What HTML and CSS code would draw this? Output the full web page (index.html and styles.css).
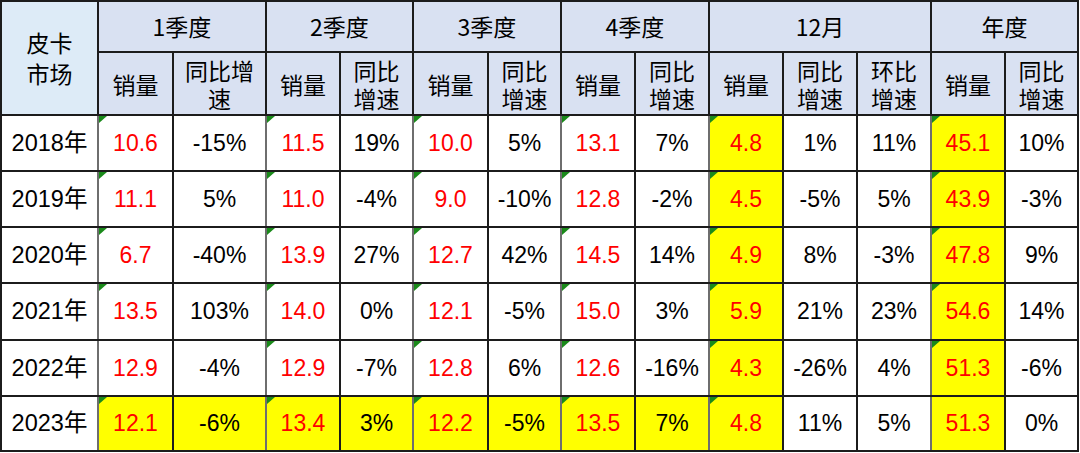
FILE: index.html
```html
<!DOCTYPE html>
<html lang="zh-CN">
<head>
<meta charset="utf-8">
<title>皮卡市场</title>
<link rel="stylesheet" href="styles.css">
</head>
<body>
<div class="sheet">
  <div class="c hd corner"><span>皮卡</span><span>市场</span></div>
  <div class="c hd q1">1季度</div>
  <div class="c hd q2">2季度</div>
  <div class="c hd q2">3季度</div>
  <div class="c hd q2">4季度</div>
  <div class="c hd q3">12月</div>
  <div class="c hd q2">年度</div>

  <div class="c hd sub">销量</div><div class="c hd sub">同比增速</div>
  <div class="c hd sub">销量</div><div class="c hd sub">同比增速</div>
  <div class="c hd sub">销量</div><div class="c hd sub">同比增速</div>
  <div class="c hd sub">销量</div><div class="c hd sub">同比增速</div>
  <div class="c hd sub">销量</div><div class="c hd sub">同比增速</div><div class="c hd sub">环比增速</div>
  <div class="c hd sub">销量</div><div class="c hd sub">同比增速</div>

  <div class="c yr">2018年</div>
  <div class="c v t">10.6</div><div class="c">-15%</div>
  <div class="c v t">11.5</div><div class="c">19%</div>
  <div class="c v t">10.0</div><div class="c">5%</div>
  <div class="c v t">13.1</div><div class="c">7%</div>
  <div class="c v t y">4.8</div><div class="c">1%</div><div class="c">11%</div>
  <div class="c v t y">45.1</div><div class="c">10%</div>

  <div class="c yr">2019年</div>
  <div class="c v t">11.1</div><div class="c">5%</div>
  <div class="c v t">11.0</div><div class="c">-4%</div>
  <div class="c v t">9.0</div><div class="c">-10%</div>
  <div class="c v t">12.8</div><div class="c">-2%</div>
  <div class="c v t y">4.5</div><div class="c">-5%</div><div class="c">5%</div>
  <div class="c v t y">43.9</div><div class="c">-3%</div>

  <div class="c yr">2020年</div>
  <div class="c v t">6.7</div><div class="c">-40%</div>
  <div class="c v t">13.9</div><div class="c">27%</div>
  <div class="c v t">12.7</div><div class="c">42%</div>
  <div class="c v t">14.5</div><div class="c">14%</div>
  <div class="c v t y">4.9</div><div class="c">8%</div><div class="c">-3%</div>
  <div class="c v t y">47.8</div><div class="c">9%</div>

  <div class="c yr">2021年</div>
  <div class="c v t">13.5</div><div class="c">103%</div>
  <div class="c v t">14.0</div><div class="c">0%</div>
  <div class="c v t">12.1</div><div class="c">-5%</div>
  <div class="c v t">15.0</div><div class="c">3%</div>
  <div class="c v t y">5.9</div><div class="c">21%</div><div class="c">23%</div>
  <div class="c v t y">54.6</div><div class="c">14%</div>

  <div class="c yr">2022年</div>
  <div class="c v">12.9</div><div class="c">-4%</div>
  <div class="c v t">12.9</div><div class="c">-7%</div>
  <div class="c v t">12.8</div><div class="c">6%</div>
  <div class="c v t">12.6</div><div class="c">-16%</div>
  <div class="c v t y">4.3</div><div class="c">-26%</div><div class="c">4%</div>
  <div class="c v t y">51.3</div><div class="c">-6%</div>

  <div class="c yr">2023年</div>
  <div class="c v t y">12.1</div><div class="c y">-6%</div>
  <div class="c v t y">13.4</div><div class="c y">3%</div>
  <div class="c v t y">12.2</div><div class="c y">-5%</div>
  <div class="c v t y">13.5</div><div class="c y">7%</div>
  <div class="c v t y">4.8</div><div class="c">11%</div><div class="c">5%</div>
  <div class="c v y">51.3</div><div class="c">0%</div>
</div>
</body>
</html>
```

FILE: styles.css
```css
html, body {
  margin: 0;
  padding: 0;
  background: #ffffff;
}

.sheet {
  display: inline-grid;
  grid-template-columns: 95px 73px 91px 72px 71px 73px 71px 72px 72px 72px 72px 72px 72px 71px;
  grid-template-rows: 49px 61px 54px 54px 54px 55px 54px 53px;
  gap: 2px;
  padding: 2px;
  background: #1c1c1c;
  font-family: "Liberation Sans", "Noto Sans CJK SC", sans-serif;
  font-size: 23px;
  color: #000000;
}

.c {
  position: relative;
  display: flex;
  align-items: center;
  justify-content: center;
  text-align: center;
  background: #ffffff;
  line-height: 29px;
  padding: 0 4px;
}

.hd {
  background: #d9e1f2;
  font-family: "Noto Sans CJK SC", "Liberation Sans", sans-serif;
}

.hd.q1, .hd.q2 {
  grid-column: span 2;
}

.hd.q3 {
  grid-column: span 3;
}

.corner {
  grid-row: span 2;
  flex-direction: column;
  gap: 0;
  background: #ddebf7;
  line-height: 31px;
}

.corner span {
  display: block;
  height: 31px;
}

.sub {
  line-height: 28px;
}

.yr {
  padding: 0;
  font-size: 23.5px;
}

.v {
  color: #ff0000;
  box-shadow: -2px 0 0 #6e6e6e;
}

.y {
  background: #ffff00;
}

.t::before {
  content: "";
  position: absolute;
  left: 0;
  top: 0;
  width: 8px;
  height: 7px;
  background: #1a8a1a;
  clip-path: polygon(0 0, 100% 0, 0 100%);
}
```
